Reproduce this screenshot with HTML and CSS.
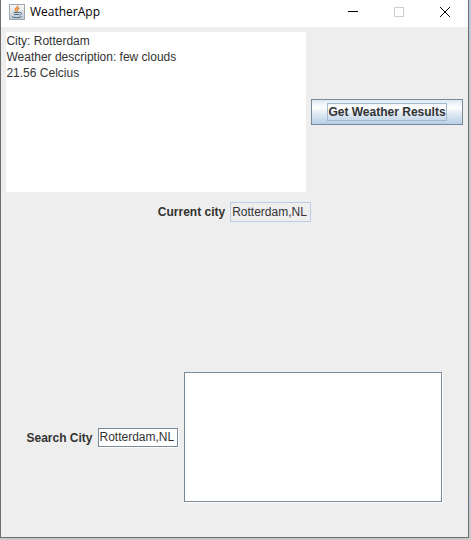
FILE: index.html
```html
<!DOCTYPE html>
<html lang="en">
<head>
<meta charset="utf-8">
<title>WeatherApp</title>
<link rel="stylesheet" href="styles.css">
</head>
<body>
<div class="window">
  <header class="titlebar">
    <svg class="app-icon" viewBox="0 0 16 16" aria-hidden="true">
      <defs>
        <linearGradient id="tile" x1="0" y1="0" x2="0" y2="1">
          <stop offset="0" stop-color="#fbfbfb"/>
          <stop offset="1" stop-color="#bcc5cc"/>
        </linearGradient>
      </defs>
      <rect x=".5" y=".5" width="15" height="15" fill="url(#tile)" stroke="#9ca7b0"/>
      <path d="M8.700 1.500C9.400 3.500 5.800 4 6.300 6c.2.700.9 1.100 1.100 1.700M10.400 3.800C8.500 4.600 7.700 5.300 8.500 6.300c.4.600.1 1-.2 1.400" fill="none" stroke="#e5802c" stroke-width="1.300"/>
      <path d="M4.500 8.500H10.500M5 10.500H10M3 12.500c1.500 1.600 7.500 1.500 9.500 0M10.800 8.500c2.500-.3 2.500 1.900-.3 2.500" fill="none" stroke="#456f91"/>
    </svg>
    <h1 class="title">WeatherApp</h1>
    <button class="control" type="button" aria-label="Minimize">
      <svg class="glyph" viewBox="0 0 10 10"><path d="M0 4.500H10"/></svg>
    </button>
    <button class="control" type="button" aria-label="Maximize" disabled>
      <svg class="glyph" viewBox="0 0 10 10"><path d="M.5.5H9.500V9.500H.5Z"/></svg>
    </button>
    <button class="control" type="button" aria-label="Close">
      <svg class="glyph" viewBox="0 0 10 10"><path d="M0 0L10 10M10 0L0 10"/></svg>
    </button>
  </header>
  <main class="content">
    <div class="row">
      <textarea class="results" aria-label="Weather results">City: Rotterdam
Weather description: few clouds
21.56 Celcius</textarea>
      <button class="fetch" type="button"><span class="fetch-label">Get Weather Results</span></button>
    </div>
    <div class="row row-current">
      <label class="label" for="current">Current city</label>
      <input class="field field-readonly" id="current" type="text" value="Rotterdam,NL" readonly>
    </div>
    <div class="row">
      <label class="label" for="search">Search City</label>
      <input class="field etched" id="search" type="text" value="Rotterdam,NL">
      <textarea class="list etched" aria-label="Search results"></textarea>
    </div>
  </main>
</div>
</body>
</html>
```
FILE: styles.css
```css
* {
  box-sizing: border-box;
}

body {
  margin: 0;
  min-height: 100vh;
  display: flex;
  padding: 0 2px 2px 0;
  background: linear-gradient(#b9c6dc 0, #b9c6dc 28px, #c8c8c8 50px, #c8c8c8 480px, #c4c8d8 500px, #c8c8c8);
  font: 12px/16px "Liberation Sans", Arial, sans-serif;
  color: #333;
}

button,
input,
textarea {
  margin: 0;
  font: inherit;
  color: inherit;
}

.window {
  flex: 1;
  display: flex;
  flex-direction: column;
  border: 1px solid #6e6e6e;
  border-top: 0;
  background: #eee;
}

.titlebar {
  display: flex;
  align-items: center;
  height: 27px;
  padding: 0 0 4px 8px;
  background: #fff;
}

.app-icon {
  width: 16px;
  height: 16px;
}

.title {
  flex: 1;
  margin: 0 0 0 5px;
  font: 12px/16px "Open Sans", "Noto Sans", sans-serif;
  color: #000;
}

.control {
  display: flex;
  justify-content: center;
  align-items: center;
  width: 46px;
  height: 24px;
  padding: 0;
  border: 0;
  background: none;
  color: #000;
}

.control:disabled {
  color: #ccc;
}

.glyph {
  width: 10px;
  height: 10px;
  fill: none;
  stroke: currentColor;
}

.content {
  display: flex;
  flex-direction: column;
  padding: 5px;
}

.row {
  display: flex;
  justify-content: center;
  align-items: center;
  gap: 5px;
}

.row-current {
  padding: 10px 0 150px;
}

.results {
  width: 300px;
  height: 160px;
  padding: 1px 0;
  border: 0;
  resize: none;
  background: #fff;
}

.fetch {
  padding: 3px 15px;
  border: 1px solid #7a8a99;
  background: linear-gradient(#dde8f3 0%, #fff 30%, #dde8f3 60%, #b8cfe5 100%);
  font-weight: bold;
}

.fetch-label {
  display: block;
  border: 1px solid #a3b8cc;
  line-height: 17px;
  height: 18px;
  white-space: nowrap;
}

.label {
  font-weight: bold;
}

.field {
  width: 81px;
  height: 20px;
  padding: 0 1px;
  border: 1px solid #b8cfe5;
  background: #fff;
}

.field-readonly {
  background: #eee;
}

.etched {
  margin: 0 1px 1px 0;
  border-color: #7a8a99;
  box-shadow: 1px 1px 0 #fff;
}

.field.etched {
  width: 80px;
  height: 19px;
}

.list {
  width: 258px;
  height: 130px;
  border: 1px solid #7a8a99;
  resize: none;
  background: #fff;
}
```
